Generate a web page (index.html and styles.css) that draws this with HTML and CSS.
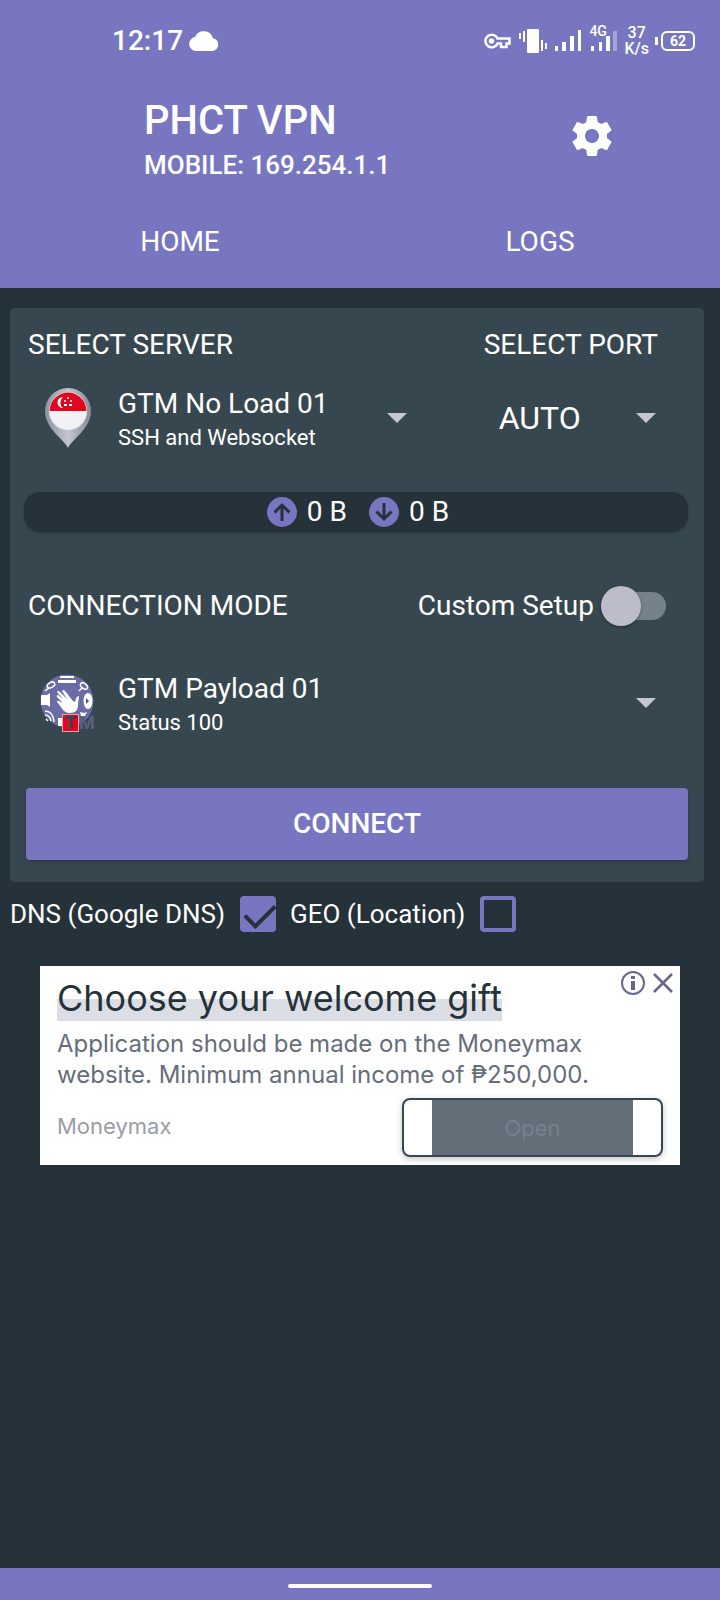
FILE: index.html
```html
<!DOCTYPE html>
<html lang="en">
<head>
  <meta charset="UTF-8" />
  <meta name="viewport" content="width=device-width, initial-scale=1.0" />
  <title>PHCT VPN</title>
  <link rel="stylesheet" href="styles.css">
</head>
<body>
  <header class="app-header">
    <div class="status-bar">
      <span class="clock">12:17</span>
      <svg class="cloud" width="30" height="20" viewBox="0 0 30 20"><path d="M7 20a7 7 0 0 1-1-13.900A9.500 9.500 0 0 1 24 7.200 6.500 6.500 0 0 1 23.500 20z" fill="#fff"/></svg>
      <div class="status-icons">
        <svg width="28" height="18" viewBox="0 0 28 18" fill="none" stroke="#fff" stroke-width="2.500"><path d="M13.500 6.500A6.300 6.300 0 1 0 13.500 11.500H17V15H22.500V11.500H25.500V6.500Z"/><circle cx="7.500" cy="9" r="1.500"/></svg>
        <svg width="28" height="24" viewBox="0 0 28 24" fill="#fff"><rect x="8" width="12" height="24" rx="1"/><path d="M0 4h2v6H0zM4 2h2v11H4zM22 11h2v11h-2zM26 14h2v6h-2z"/></svg>
        <svg width="28" height="22" viewBox="0 0 28 22" fill="#fff"><path d="M1 16h3v5H1zM8 12h4v9H8zM16 6h4v15h-4zM24 0h3v21h-3z"/></svg>
        <div class="mobile-signal">
          <span>4G</span>
          <svg width="28" height="22" viewBox="0 0 28 22" fill="#fff"><path d="M2 16h3v5H2zM10 12h3v9h-3zM17 6h4v15h-4z"/><path d="M24 1h4v20h-4z" opacity=".35"/></svg>
        </div>
        <span class="speed">37<br>K/s</span>
        <div class="battery"><span>62</span></div>
      </div>
    </div>

    <div class="toolbar">
      <div class="app-title">
        <h1>PHCT VPN</h1>
        <p>MOBILE: 169.254.1.1</p>
      </div>
      <button class="settings" aria-label="Settings">
        <svg width="48" height="48" viewBox="0 0 24 24" fill="#fff"><path d="M19.430 12.980c.04-.32.07-.64.07-.98s-.03-.66-.07-.98l2.110-1.650c.19-.15.24-.42.12-.64l-2-3.460c-.12-.22-.39-.3-.61-.22l-2.490 1c-.52-.4-1.080-.73-1.690-.98l-.38-2.650C14.460 2.180 14.250 2 14 2h-4c-.25 0-.46.18-.49.42l-.38 2.650c-.61.25-1.170.59-1.690.98l-2.490-1c-.23-.09-.49 0-.61.22l-2 3.460c-.13.22-.07.49.12.64l2.110 1.650c-.04.32-.07.65-.07.98s.03.66.07.98l-2.110 1.650c-.19.15-.24.42-.12.64l2 3.460c.12.22.39.3.61.22l2.490-1c.52.4 1.080.73 1.690.98l.38 2.650c.03.24.24.42.49.42h4c.25 0 .46-.18.49-.42l.38-2.650c.61-.25 1.170-.59 1.690-.98l2.490 1c.23.09.49 0 .61-.22l2-3.460c.12-.22.07-.49-.12-.64l-2.110-1.650zM12 15.500c-1.930 0-3.500-1.570-3.500-3.500s1.570-3.500 3.500-3.500 3.500 1.570 3.500 3.500-1.570 3.500-3.500 3.500z"/></svg>
      </button>
    </div>

    <nav class="tabs">
      <a href="#home">HOME</a>
      <a href="#logs">LOGS</a>
    </nav>
  </header>

  <main>
    <section class="card" id="home">
      <div class="row labels">
        <label class="server-col" for="server">SELECT SERVER</label>
        <label class="port-col" for="port">SELECT PORT</label>
      </div>

      <div class="row pickers">
        <div class="server-col picker">
          <svg class="picker-icon" width="46" height="60" viewBox="0 0 46 60">
            <defs>
              <linearGradient id="pin" x1="0" x2="1"><stop offset="0" stop-color="#8b93a3"/><stop offset=".5" stop-color="#c3c5cf"/><stop offset="1" stop-color="#858b96"/></linearGradient>
            </defs>
            <path d="M23 60C19 51 0 41 0 23a23 23 0 0 1 46 0C46 41 27 51 23 60z" fill="url(#pin)"/>
            <circle cx="23" cy="23" r="19" fill="#f1f1f5"/>
            <path d="M4.500 23a18.500 18.500 0 0 1 37 0z" fill="#e2061f"/>
            <path d="M18 9a5.500 5.500 0 1 0 0 11 7 7 0 0 1 0-11z" fill="#fff"/>
            <g fill="#fff"><circle cx="23" cy="10" r="1"/><circle cx="20" cy="13" r="1"/><circle cx="26" cy="13" r="1"/><path d="M19 16h3v2h-3zM24 16h3v2h-3z"/></g>
          </svg>
          <div class="picker-text">
            <select id="server"><option>GTM No Load 01</option></select>
            <small>SSH and Websocket</small>
          </div>
          <span class="caret"></span>
        </div>
        <div class="port-col picker port">
          <select id="port"><option>AUTO</option></select>
          <span class="caret"></span>
        </div>
      </div>

      <div class="traffic">
        <svg width="30" height="30" viewBox="0 0 30 30"><circle cx="15" cy="15" r="15" fill="#7876c1"/><path d="M15 24V9M7.500 15.500 15 8l7.500 7.500" fill="none" stroke="#263239" stroke-width="3"/></svg>
        <span>0 B</span>
        <svg width="30" height="30" viewBox="0 0 30 30"><circle cx="15" cy="15" r="15" fill="#7876c1"/><path d="M15 6v15M7.500 14.500 15 22l7.500-7.500" fill="none" stroke="#263239" stroke-width="3"/></svg>
        <span>0 B</span>
      </div>

      <div class="row mode">
        <label for="payload">CONNECTION MODE</label>
        <label class="custom">Custom Setup <input type="checkbox" role="switch" class="switch"></label>
      </div>

      <div class="picker payload">
        <div class="picker-icon payload-icon">
          <svg width="56" height="58" viewBox="0 0 56 58">
            <circle cx="27" cy="27" r="26.500" fill="#6a6da5"/>
            <g fill="#fff">
              <path d="M17 18q1-2 3 0l7 7-5-8q1-2 3 0l8 10 2 1q1-6 4-6l-1 9q0 8-8 8-6 0-9-6l-4-5q0-2 2-1l4 2-6-6q-1-2 1-2l5 4z"/>
              <path d="M18 6h18v3H18zM20 2h14v2H20zM1 21h6l3-2v14l-3-2H1z"/>
              <ellipse cx="48" cy="27" rx="4.500" ry="8"/>
              <path d="M40 38l4 1 3-1-2 4h-4zM18 44h4v8h-4z"/>
            </g>
            <path d="M46 24v6l3-3z" fill="#50547f"/>
            <g fill="none" stroke="#fff" stroke-width="1.500"><ellipse cx="11" cy="11" rx="4" ry="2.500" transform="rotate(-30 11 11)"/><path d="M9 14l-4 3M39 17l3-3"/><ellipse cx="44" cy="12" rx="4" ry="2.500" transform="rotate(40 44 12)"/><path d="M5 37q8 0 9 11M5 41q5 0 6 6M6 45l2 2"/></g>
          </svg>
          <span class="tm"><b>T</b><i>M</i></span>
        </div>
        <div class="picker-text">
          <select id="payload"><option>GTM Payload 01</option></select>
          <small>Status 100</small>
        </div>
        <span class="caret"></span>
      </div>

      <button class="connect">CONNECT</button>
    </section>

    <div class="options">
      <label>DNS (Google DNS) <input type="checkbox" checked></label>
      <label>GEO (Location) <input type="checkbox"></label>
    </div>

    <aside class="ad">
      <div class="ad-controls">
        <button aria-label="Ad info"><svg width="24" height="24" viewBox="0 0 24 24"><circle cx="12" cy="12" r="11" fill="none" stroke="#66678f" stroke-width="2"/><path d="M10 10h4v9h-4zM10 5h4v3h-4z" fill="#66678f"/></svg></button>
        <button aria-label="Close ad"><svg width="20" height="20" viewBox="0 0 20 20"><path d="M1 1l18 18M19 1L1 19" stroke="#66678f" stroke-width="2.500"/></svg></button>
      </div>
      <h2><span>Choose your welcome gift</span></h2>
      <p>Application should be made on the Moneymax website. Minimum annual income of ₱250,000.</p>
      <div class="ad-footer">
        <span>Moneymax</span>
        <button class="open"><span>Open</span></button>
      </div>
    </aside>
  </main>

  <footer class="nav-bar"><span></span></footer>
</body>
</html>
```
FILE: styles.css
```css
* {
  margin: 0;
  padding: 0;
  box-sizing: border-box;
}

body {
  font-family: Roboto, sans-serif;
  font-size: 28px;
  line-height: 36px;
  min-height: 100vh;
  display: flex;
  flex-direction: column;
  background: #263239;
  color: #fff;
}

button, select {
  font: inherit;
  color: inherit;
  background: none;
  border: none;
}

svg {
  display: block;
  flex: none;
}

a {
  color: inherit;
  text-decoration: none;
}

/* header */
.app-header {
  background: #7876c1;
}

.status-bar {
  display: flex;
  align-items: center;
  height: 82px;
  padding: 0 25px 0 112px;
  font-weight: 500;
}

.cloud {
  margin-left: 6px;
}

.status-icons {
  display: flex;
  align-items: center;
  gap: 7px;
  margin-left: auto;
}

.mobile-signal {
  position: relative;
}

.mobile-signal span {
  position: absolute;
  top: -6px;
  left: 0;
  font-size: 14px;
  line-height: 14px;
}

.speed {
  font-size: 16px;
  line-height: 16px;
  text-align: center;
}

.battery {
  position: relative;
  width: 34px;
  height: 20px;
  margin-left: 5px;
  border: 2px solid #fff;
  border-radius: 6px;
  font-size: 14px;
  font-weight: 700;
  line-height: 16px;
  text-align: center;
}

.battery::before {
  content: '';
  position: absolute;
  left: -8px;
  top: 4px;
  width: 3px;
  height: 8px;
  background: #fff;
}

.toolbar {
  display: flex;
  align-items: center;
  justify-content: space-between;
  height: 108px;
  padding: 0 104px 0 144px;
}

.app-title {
  padding-top: 10px;
}

h1 {
  font-size: 40px;
  font-weight: 500;
  line-height: 48px;
}

.app-title p {
  font-size: 26px;
  font-weight: 500;
  line-height: 40px;
}

.tabs {
  display: flex;
  height: 98px;
  padding-top: 6px;
}

.tabs a {
  flex: 1;
  display: flex;
  align-items: center;
  justify-content: center;
}

/* server card */
.card {
  margin: 20px 16px 0 10px;
  padding: 19px 18px 22px;
  background: #37474f;
  border-radius: 5px;
}

.row {
  display: flex;
  align-items: center;
}

.server-col {
  flex: 1;
}

.port-col {
  flex: 0 0 35%;
}

.labels .port-col {
  text-align: center;
}

.pickers {
  height: 110px;
}

.picker {
  display: flex;
  align-items: center;
}

.picker-icon {
  width: 80px;
  margin-right: 10px;
}

.picker-text {
  flex: 1;
  min-width: 0;
  padding-top: 4px;
}

.picker-text small {
  display: block;
  font-size: 22px;
  line-height: 32px;
}

select {
  display: block;
  width: 100%;
  height: 36px;
  appearance: none;
  outline: none;
}

.caret {
  flex: none;
  border: 10px solid transparent;
  border-top-color: #c5c6d3;
  border-bottom: 0;
}

.server-col .caret {
  margin-right: 49px;
}

.port {
  padding: 0 30px 0 43px;
  font-size: 32px;
}

.traffic {
  display: flex;
  align-items: center;
  justify-content: center;
  gap: 10px;
  height: 40px;
  margin: 19px -2px 0 -4px;
  padding-left: 4px;
  background: #263239;
  border-radius: 16px;
  box-shadow: 0 1px 3px rgba(38, 50, 57, 0.6);
}

.traffic span + svg {
  margin-left: 12px;
}

.mode {
  justify-content: space-between;
  height: 40px;
  margin-top: 54px;
}

.custom {
  display: flex;
  align-items: center;
  gap: 7px;
  padding-right: 20px;
}

.switch {
  appearance: none;
  position: relative;
  width: 65px;
  height: 40px;
}

.switch::before {
  content: '';
  position: absolute;
  inset: 6px 0 6px 8px;
  border-radius: 14px;
  background: #76828b;
}

.switch::after {
  content: '';
  position: absolute;
  left: 0;
  top: 0;
  width: 40px;
  height: 40px;
  border-radius: 50%;
  background: #bcbdc9;
  box-shadow: 0 1px 3px rgba(0, 0, 0, 0.4);
}

.payload {
  height: 110px;
  margin-top: 22px;
  padding-right: 30px;
}

.payload-icon {
  position: relative;
  padding-left: 12px;
}

.tm {
  position: absolute;
  left: 34px;
  top: 40px;
  display: flex;
  font-size: 18px;
  font-weight: 700;
  line-height: 18px;
}

.tm b {
  width: 17px;
  background: #e2061f;
  border: 1px solid #e6a0b0;
  line-height: 16px;
  color: #37474f;
  text-align: center;
}

.tm i {
  color: #56617c;
  font-style: normal;
}

.connect {
  display: block;
  width: calc(100% + 4px);
  height: 72px;
  margin: 30px -2px 0;
  background: #7876c1;
  border-radius: 4px;
  box-shadow: 0 2px 3px rgba(38, 50, 57, 0.6);
  font-weight: 500;
}

/* dns / geo */
.options {
  display: flex;
  gap: 14px;
  padding: 14px 10px 0;
  font-size: 26px;
}

.options label {
  display: flex;
  align-items: center;
  gap: 15px;
}

.options input {
  appearance: none;
  width: 36px;
  height: 36px;
  border: 4px solid #7876c1;
  border-radius: 4px;
}

.options input:checked {
  background: #7876c1;
}

.options input:checked::before {
  content: '';
  display: block;
  width: 26px;
  height: 13px;
  margin: 4px 0 0 1px;
  border: solid #263239;
  border-width: 0 0 4px 4px;
  transform: rotate(-45deg);
}

/* ad banner */
.ad {
  position: relative;
  margin: 34px 40px 0;
  padding: 9px 17px 8px;
  background: #fff;
  font-family: Inter, sans-serif;
  color: #666d7b;
}

.ad-controls {
  position: absolute;
  top: 5px;
  right: 7px;
  display: flex;
  align-items: center;
  gap: 8px;
}

h2 {
  font-size: 36px;
  font-weight: 400;
  line-height: 46px;
  color: #263239;
}

h2 span {
  display: inline-block;
  background: linear-gradient(transparent 24px, #dcdee6 24px);
}

.ad p {
  font-size: 24px;
  line-height: 31px;
  margin-top: 7px;
}

.ad-footer {
  display: flex;
  align-items: center;
  justify-content: space-between;
  margin-top: 8px;
  font-size: 22px;
  color: #9b9ca4;
}

.ad-footer > span {
  padding-bottom: 4px;
}

.open {
  width: 261px;
  height: 59px;
  padding: 0 28px;
  border: 2px solid #37474f;
  border-radius: 8px;
  box-shadow: 0 2px 6px rgba(60, 60, 90, 0.3);
  color: #76828d;
}

.open span {
  display: flex;
  align-items: center;
  justify-content: center;
  height: 100%;
  background: #636e79;
}

.nav-bar {
  display: flex;
  align-items: center;
  justify-content: center;
  height: 32px;
  margin-top: auto;
  background: #7876c1;
}

.nav-bar span {
  width: 20%;
  height: 4px;
  margin-top: 4px;
  border-radius: 2px;
  background: #fff;
}
```
